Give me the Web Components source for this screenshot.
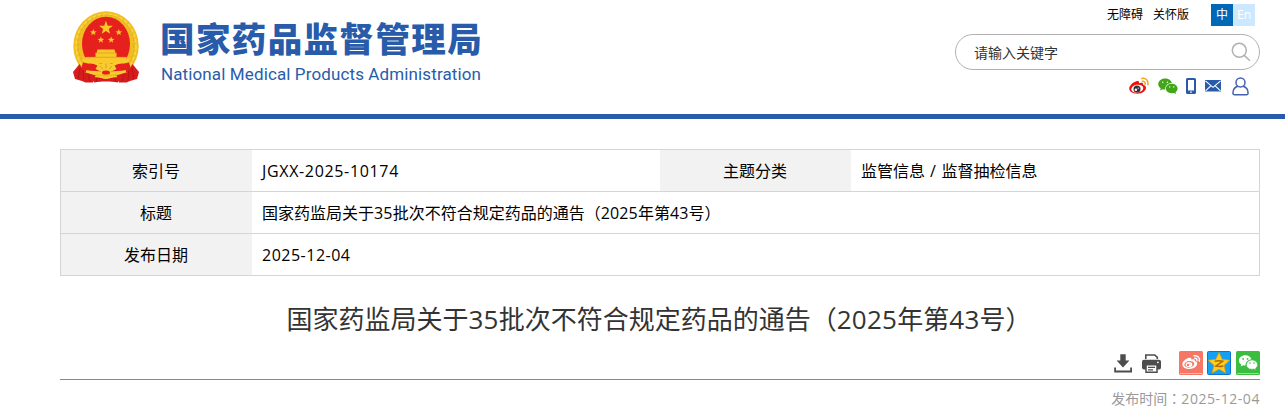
<!DOCTYPE html>
<html lang="zh-CN">
<head>
<meta charset="utf-8">
<title>国家药监局关于35批次不符合规定药品的通告</title>
<style>
    body {
        margin: 0;
        height: 417px;
        overflow: hidden;
        background: #fff;
        color: #000;
        font-family: "Open Sans", "Noto Sans CJK SC", sans-serif;
        font-size: 16px;
    }
    main {
        width: 1200px;
        margin: 30px 0 0 60px;
    }
</style>
</head>
<body>
    <site-header></site-header>
    <main>
        <info-table>
            <info-cell head>索引号</info-cell>
            <info-cell><latin-run style="--ls:.66px">JGXX-2025-10174</latin-run></info-cell>
            <info-cell head>主题分类</info-cell>
            <info-cell>监管信息<latin-run style="--ls:.8px"> / </latin-run>监督抽检信息</info-cell>
            <info-cell head>标题</info-cell>
            <info-cell wide>国家药监局关于<latin-run>35</latin-run>批次不符合规定药品的通告<full-mark>（</full-mark><latin-run>2025</latin-run>年第<latin-run>43</latin-run>号<full-mark>）</full-mark></info-cell>
            <info-cell head>发布日期</info-cell>
            <info-cell wide><latin-run style="--ls:.5px">2025-12-04</latin-run></info-cell>
        </info-table>
        <article-title>国家药监局关于<latin-run>35</latin-run>批次不符合规定药品的通告<full-mark>（</full-mark><latin-run>2025</latin-run>年第<latin-run>43</latin-run>号<full-mark>）</full-mark></article-title>
        <article-tools></article-tools>
        <publish-time>2025-12-04</publish-time>
    </main>

<script>
const ICONS = {
    weibo: `<svg viewBox="0 0 20 18" width="20" height="18">
        <path fill="#e11" d="M7.500 4.200C9 3.700 10.400 4 10 6.300c2.400-1 4.600-.8 4.100 1.400 1.800.5 2.900 1.400 2.900 3.100 0 3.300-4 5.900-8.700 5.900S.2 14.600.2 11.500C.2 8.500 4.200 5 7.500 4.200z"/>
        <ellipse cx="8.300" cy="11.600" rx="6" ry="3.900" fill="#fff" transform="rotate(-8 8.300 11.600)"/>
        <circle cx="8" cy="12" r="3.500" fill="#333"/><circle cx="6.900" cy="12.700" r="1.200" fill="#fff"/><circle cx="9.200" cy="11.200" r=".6" fill="#fff"/>
        <path fill="none" stroke="#f0a818" stroke-width="1.500" stroke-linecap="round" d="M12.800 1.500c4-.8 7 2.300 5.900 6.200M13.400 4.300c1.900-.4 3.200 1 2.700 2.900"/></svg>`,
    wechat: `<svg viewBox="0 0 20 16" width="20" height="16">
        <path fill="#43a51b" d="M7 .4C3.200.4.200 2.900.200 6c0 1.800 1 3.300 2.500 4.300L2 12.500l2.700-1.300c.8.2 1.600.3 2.500.3C7 7.500 9.900 5 13.900 5 13.400 2.300 10.600.4 7 .4z"/>
        <path fill="#43a51b" d="M13.700 5.700c3.300 0 5.900 2.100 5.900 4.800 0 1.500-.8 2.800-2.100 3.600l.5 1.800-2.200-1c-.7.2-1.300.3-2.100.3-3.300 0-5.900-2.100-5.900-4.700 0-2.700 2.600-4.800 5.900-4.800z"/>
        <g fill="#fff"><circle cx="4.700" cy="4.300" r=".7"/><circle cx="9.400" cy="4.300" r=".7"/><circle cx="11.700" cy="8.900" r=".7"/><circle cx="15.700" cy="8.900" r=".7"/></g></svg>`,
    phone: `<svg viewBox="0 0 11 17" width="11" height="17"><path fill="#285caa" fill-rule="evenodd" d="M1.500 0h7A1.500 1.500 0 0 1 10 1.500v13A1.500 1.500 0 0 1 8.500 16h-7A1.500 1.500 0 0 1 0 14.500v-13A1.500 1.500 0 0 1 1.500 0zM2 2v10.500h6V2zM4.200 13.500v1.200h1.600v-1.200z"/></svg>`,
    mail: `<svg viewBox="0 0 16 12" width="16" height="12"><path fill="#285caa" d="M0 0h16v11.500H0z"/><path fill="none" stroke="#fff" stroke-width="1.100" d="M.4.9 8 7.300 15.600.9M.5 10.800l5.300-5M15.500 10.800l-5.300-5"/></svg>`,
    user: `<svg viewBox="0 0 17 19" width="17" height="19"><g fill="none" stroke="#4560ae" stroke-width="1.500"><circle cx="8.500" cy="5.400" r="4.500"/><path d="M5.800 9.300C2.600 10.300.9 12.700.9 16.300c0 1 .3 1.400 1.300 1.400h12.600c1 0 1.300-.4 1.300-1.400 0-3.600-1.700-6-4.900-7"/></g></svg>`,
    search: `<svg viewBox="0 0 20 20" width="20" height="20"><g fill="none" stroke="#b1b1b1" stroke-width="1.500"><circle cx="8.300" cy="8.300" r="7"/><path d="m13.300 13.400 5.600 5.400"/></g></svg>`,
    download: `<svg viewBox="0 0 19 19" width="19" height="19"><path fill="#4d4d4d" d="M6.300.3h5.400v6.200h3.700L9 13.400 2.600 6.500h3.700z"/><path fill="none" stroke="#4d4d4d" stroke-width="1.800" d="M1.100 13.500v4h16v-4"/></svg>`,
    print: `<svg viewBox="0 0 19 19" width="19" height="19"><path fill="none" stroke="#4d4d4d" stroke-width="1.600" d="M3.800 5V1h9l2.500 2.300V5"/><path fill="#4d4d4d" d="M2 5.800h15a2 2 0 0 1 2 2v5.700a2 2 0 0 1-2 2H2a2 2 0 0 1-2-2V7.800a2 2 0 0 1 2-2z"/><path fill="#fff" stroke="#4d4d4d" stroke-width="1.500" d="M4 10.800h11v7.400H4z"/><path stroke="#4d4d4d" stroke-width="1.200" d="M6 13.300h7M6 15.800h5"/><circle cx="15.900" cy="8.300" r=".9" fill="#fff"/></svg>`,
    shareWeibo: `<svg viewBox="0 0 24 24" width="24" height="24"><rect width="24" height="24" rx="1.500" fill="#f67766"/><path fill="#ffb8ac" d="M1 22h22v1H1z"/>
        <path fill="#fff" d="M10.100 6.800c1.700-.5 2.700.1 2.200 2 2-.8 4-.6 3.500 1.200 1.600.5 2.400 1.300 2.400 2.600 0 2.900-3.500 5.400-7.700 5.400s-7.200-2-7.200-4.800c0-2.700 3.900-5.700 6.800-6.400z"/>
        <ellipse cx="10.300" cy="13.300" rx="5" ry="3.300" fill="#f67766" transform="rotate(-8 10.300 13.300)"/><ellipse cx="10" cy="13.500" rx="3.300" ry="2.600" fill="#fff"/><circle cx="9" cy="13.900" r="1.200" fill="#f67766"/><circle cx="11" cy="12.900" r=".5" fill="#f67766"/>
        <path fill="none" stroke="#fff" stroke-width="1.400" stroke-linecap="round" d="M15.100 4.800c3.500-.6 6.100 2 5.200 5.400M15.800 7.300c1.500-.2 2.400.8 2.100 2.200"/></svg>`,
    shareQzone: `<svg viewBox="0 0 24 24" width="24" height="24"><rect x=".5" y=".5" width="23" height="23" rx="1" fill="#12a0f5" stroke="#0874d0"/>
        <path fill="#ffcd1c" stroke="#e0930b" stroke-width=".7" stroke-linejoin="round" d="m12 1.300 3.200 7 7.600.9-5.700 5.100 1.700 7.800L12 18.200l-6.800 3.900 1.700-7.800-5.700-5.100 7.600-.9z"/>
        <path fill="none" stroke="#b06a05" stroke-width="1.500" d="M7.700 10.300c3-.6 5.800-.6 8-.1l-6.900 4.900c2.500.6 5.200.5 7.500-.1"/></svg>`,
    shareWechat: `<svg viewBox="0 0 24 24" width="24" height="24"><rect width="24" height="24" rx="1.500" fill="#3bbd3f"/><path fill="#93df94" d="M1 22h22v1H1z"/>
        <path fill="#fff" d="M9.300 4.200c-3.600 0-6.400 2.300-6.400 5.200 0 1.700.9 3.100 2.400 4.100l-.6 2 2.500-1.200c.7.2 1.500.3 2.300.3-.1-3.700 2.700-6 6.200-6-.6-2.500-3.200-4.400-6.400-4.400z"/>
        <path fill="#fff" stroke="#3bbd3f" stroke-width=".7" d="M16 8.900c3.200 0 5.700 2.200 5.700 4.800 0 1.500-.8 2.700-2 3.600l.4 1.900-2.200-1.100c-.6.2-1.200.3-1.900.3-3.200 0-5.700-2.100-5.700-4.700S12.800 8.900 16 8.900z"/>
        <g fill="#3bbd3f"><circle cx="7.100" cy="7.900" r=".9"/><circle cx="11.500" cy="7.900" r=".9"/><circle cx="14" cy="12" r=".8"/><circle cx="18" cy="12" r=".8"/></g></svg>`,
    emblem: `<svg viewBox="0 0 66 74" width="66" height="74">
        <ellipse cx="33" cy="35" rx="32.700" ry="34.700" fill="#f0bd22"/>
        <ellipse cx="33" cy="35" rx="30" ry="32" fill="none" stroke="#f8d645" stroke-width="1.700" stroke-dasharray="4 1.500"/>
        <ellipse cx="33" cy="34" rx="28" ry="30" fill="none" stroke="#dda01a" stroke-width=".6" stroke-dasharray="3 2"/>
        <ellipse cx="33" cy="33" rx="24" ry="27.200" fill="#e6211d"/>
        <g fill="#f8c928">
            <path d="m33 10.300 1.500 4.200 4.500.1-3.600 2.700 1.300 4.300-3.700-2.500-3.700 2.500 1.300-4.300-3.600-2.700 4.500-.1z" transform="translate(-5 -2) scale(1.150)"/>
            <path id="star" d="m33 10.300 1.600 4.200 4.600.2-3.600 2.800 1.300 4.300-3.900-2.500-3.900 2.500 1.300-4.300-3.600-2.800 4.600-.2z" transform="translate(2.800 12.600) scale(.53)"/>
            <use href="#star" x="25.500"/><use href="#star" x="7.600" y="7.500"/><use href="#star" x="17.900" y="7.500"/>
            <path d="M24.500 38.500h17l1 3.500h-19zM22.500 42h21v4h-21z"/><path d="M12.500 46h41v6.500h-41z"/>
        </g>
        <path stroke="#d49b1b" stroke-width=".7" d="M22.500 42h21M14 46.300h38"/>
        <path fill="#e6211d" d="M10 51.500c7 1 12 3.500 17 3.500h12c5 0 10-2.500 17-3.500l3 10H7z"/>
        <path fill="none" stroke="#f7cb31" stroke-width="3" d="M9.500 48.500c6 2 11 1.500 18 6M56.500 48.500c-6 2-11 1.500-18 6M13 60.500c7 2 11 0 16 2M53 60.500c-7 2-11 0-16 2"/>
        <path fill="#f7cb31" d="m22.500 58 2-3.500 3.500-2 5-1 5 1 3.500 2 2 3.500-5 2.500-5.500 3-5.500-3z"/>
        <path stroke="#d09617" stroke-width=".8" d="m27 55 3 3.500m3-6v5m6-2.500-3 3.500"/><ellipse cx="33" cy="61.500" rx="4" ry="2" fill="#e6211d"/>
        <path fill="#d81c1d" d="M0 61 6.500 53 11 61l12 3.500-3 7h-7.500L9 70l-7-2zM66 61l-6.500-8-4.500 8-12 3.500 3 7h7.500L57 70l7-2z"/>
        <path fill="#d81c1d" d="M19 65c7-1 9 2 14 2s7-3 14-2l-2 6.500c-5-1-7-1-12-1s-7 0-12 1z"/>
        <path fill="none" stroke="#a51513" stroke-width=".7" d="m7 57-2 11m5-9 1 10m4-6 2 8m42-14 2 11m-5-9-1 10m-4-6-2 8M24 67l-1 4m19-4 1 4"/>
        <path fill="none" stroke="#f7cb31" stroke-width="1.800" d="M22 65.500c4-1 7 1.500 11 1.500s7-2.500 11-1.500"/>
    </svg>`,
};

class BaseElement extends HTMLElement {
    connectedCallback() {
        if (this.shadowRoot) return;
        const shadow = this.attachShadow({ mode: 'open' });
        shadow.innerHTML = this.render();
    }
}

class SiteIcon extends BaseElement {
    render() {
        return `<style>:host { display: block; flex: none; } svg { display: block; }</style>${ICONS[this.getAttribute('name')]}`;
    }
}

// Digits and latin letters with their own letter spacing
class LatinRun extends BaseElement {
    render() {
        return `<style>:host { letter-spacing: var(--ls, .01em); white-space: pre; }</style><slot></slot>`;
    }
}

// Full-width punctuation, centred in its square
class FullMark extends BaseElement {
    render() {
        return `<style>:host { font-family: "Noto Sans CJK TC", sans-serif; line-height: 1; }</style><span lang="zh-TW"><slot></slot></span>`;
    }
}

class SiteBrand extends BaseElement {
    render() {
        return `
            <style>
                :host { display: flex; gap: 21px; color: #285caa; }
                .name { padding-top: 5px; white-space: nowrap; }
                .cn { font: 900 34.500px/42px "Noto Sans CJK SC", sans-serif; letter-spacing: 1.400px; }
                .en { font: 400 17px/22px Roboto, sans-serif; letter-spacing: .12px; margin: 5px 0 0 1px; }
            </style>
            <site-icon name="emblem"></site-icon>
            <div class="name">
                <div class="cn">国家药品监督管理局</div>
                <div class="en">National Medical Products Administration</div>
            </div>`;
    }
}

class LangSwitch extends BaseElement {
    render() {
        return `
            <style>
                :host { display: flex; color: #fff; font-size: 12px; line-height: 22px; text-align: center; }
                span { width: 22px; height: 22px; background: #cce8ff; }
                .on { background: #0068b7; }
            </style>
            <span class="on">中</span><span>En</span>`;
    }
}

class SearchBox extends BaseElement {
    render() {
        return `
            <style>
                :host {
                    display: flex; align-items: center; justify-content: space-between;
                    box-sizing: border-box; width: 305px; height: 36px; padding: 0 8px 0 18px;
                    border: 1px solid #b1b1b1; border-radius: 18px;
                    color: #333; font-size: 14px;
                }
            </style>
            <slot></slot><site-icon name="search"></site-icon>`;
    }
}

class SiteHeader extends BaseElement {
    render() {
        return `
            <style>
                :host {
                    display: flex; justify-content: space-between; box-sizing: border-box;
                    height: 119px; padding: 0 25px 0 73px; border-bottom: 5px solid #285caa;
                }
                site-brand { margin-top: 11px; }
                .side { display: flex; flex-direction: column; padding-top: 4px; }
                .links { display: flex; justify-content: flex-end; font-size: 12px; line-height: 22px; padding-right: 5px; }
                .links span { margin-right: 10px; }
                lang-switch { margin-left: 12px; }
                search-box { margin-top: 8px; }
                .social { display: flex; align-items: center; justify-content: flex-end; height: 20px; margin-top: 6px; padding-right: 11px; }
            </style>
            <site-brand></site-brand>
            <div class="side">
                <div class="links"><span>无障碍</span><span>关怀版</span><lang-switch></lang-switch></div>
                <search-box>请输入关键字</search-box>
                <div class="social">
                    <site-icon name="weibo"></site-icon>
                    <site-icon name="wechat" style="margin-left:9px"></site-icon>
                    <site-icon name="phone" style="margin-left:8px"></site-icon>
                    <site-icon name="mail" style="margin-left:8px"></site-icon>
                    <site-icon name="user" style="margin-left:11px"></site-icon>
                </div>
            </div>`;
    }
}

class InfoTable extends BaseElement {
    render() {
        return `
            <style>
                :host {
                    display: grid; grid-template-columns: 191px 408px 191px 408px;
                    grid-auto-rows: 41px; gap: 1px 0;
                    border: 1px solid #d5d5d5; background: #d5d5d5;
                }
            </style>
            <slot></slot>`;
    }
}

class InfoCell extends BaseElement {
    render() {
        return `
            <style>
                :host { display: block; padding-left: 10px; line-height: 42px; background: #fff; white-space: nowrap; }
                :host([head]) { padding: 0 1px 0 0; text-align: center; background: #f2f2f2; }
                :host([wide]) { grid-column: span 3; }
            </style>
            <slot></slot>`;
    }
}

class ArticleTitle extends BaseElement {
    render() {
        return `
            <style>
                :host { display: block; margin-top: 22px; padding-right: 2px; color: #333; font-size: 26px; line-height: 42px; text-align: center; white-space: nowrap; }
            </style>
            <slot></slot>`;
    }
}

class ArticleTools extends BaseElement {
    render() {
        return `
            <style>
                :host { display: flex; align-items: center; justify-content: flex-end; height: 24px; margin-top: 11px; padding-bottom: 4px; border-bottom: 1px solid #888; }
            </style>
            <site-icon name="download"></site-icon>
            <site-icon name="print" style="margin-left:9px"></site-icon>
            <site-icon name="shareWeibo" style="margin-left:18px"></site-icon>
            <site-icon name="shareQzone" style="margin-left:4px"></site-icon>
            <site-icon name="shareWechat" style="margin-left:5px"></site-icon>`;
    }
}

class PublishTime extends BaseElement {
    render() {
        return `
            <style>
                :host { display: block; margin-top: 8px; color: #999; font-size: 14px; line-height: 22px; text-align: right; }
            </style>
            发布时间<full-mark>：</full-mark><latin-run style="--ls:.56px"><slot></slot></latin-run>`;
    }
}

customElements.define('site-icon', SiteIcon);
customElements.define('latin-run', LatinRun);
customElements.define('full-mark', FullMark);
customElements.define('site-brand', SiteBrand);
customElements.define('lang-switch', LangSwitch);
customElements.define('search-box', SearchBox);
customElements.define('site-header', SiteHeader);
customElements.define('info-table', InfoTable);
customElements.define('info-cell', InfoCell);
customElements.define('article-title', ArticleTitle);
customElements.define('article-tools', ArticleTools);
customElements.define('publish-time', PublishTime);
</script>
</body>
</html>
